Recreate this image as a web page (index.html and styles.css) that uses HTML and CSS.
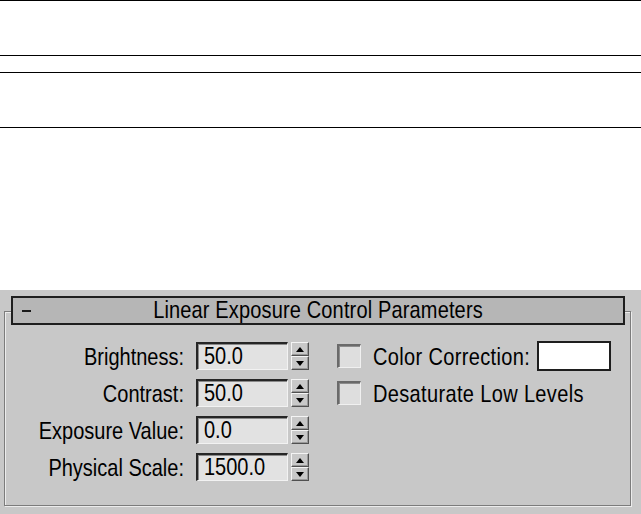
FILE: index.html
```html
<!DOCTYPE html>
<html lang="en">
<head>
<meta charset="utf-8">
<title>Linear Exposure Control Parameters</title>
<link rel="stylesheet" href="styles.css">
</head>
<body>
  <div class="doc">
    <div class="ruled"></div>
    <div class="ruled second"></div>
  </div>
  <div class="panel">
    <div class="group">
      <div class="titlebar">
        <span class="minus"></span>
        <span class="title txt">Linear Exposure Control Parameters</span>
        <span></span>
      </div>
      <div class="body">
        <div class="params">
          <label class="lbl"><span class="txt">Brightness:</span></label>
          <div class="field"><span class="txt">50.0</span></div>
          <div class="spinner"><span class="btn up"><svg width="8" height="5" viewBox="0 0 8 5"><path d="M0 5 L4 0 L8 5 Z"/></svg></span><span class="btn down"><svg width="8" height="5" viewBox="0 0 8 5"><path d="M0 0 L4 5 L8 0 Z"/></svg></span></div>

          <label class="lbl"><span class="txt">Contrast:</span></label>
          <div class="field"><span class="txt">50.0</span></div>
          <div class="spinner"><span class="btn up"><svg width="8" height="5" viewBox="0 0 8 5"><path d="M0 5 L4 0 L8 5 Z"/></svg></span><span class="btn down"><svg width="8" height="5" viewBox="0 0 8 5"><path d="M0 0 L4 5 L8 0 Z"/></svg></span></div>

          <label class="lbl"><span class="txt">Exposure Value:</span></label>
          <div class="field"><span class="txt">0.0</span></div>
          <div class="spinner"><span class="btn up"><svg width="8" height="5" viewBox="0 0 8 5"><path d="M0 5 L4 0 L8 5 Z"/></svg></span><span class="btn down"><svg width="8" height="5" viewBox="0 0 8 5"><path d="M0 0 L4 5 L8 0 Z"/></svg></span></div>

          <label class="lbl"><span class="txt">Physical Scale:</span></label>
          <div class="field"><span class="txt">1500.0</span></div>
          <div class="spinner"><span class="btn up"><svg width="8" height="5" viewBox="0 0 8 5"><path d="M0 5 L4 0 L8 5 Z"/></svg></span><span class="btn down"><svg width="8" height="5" viewBox="0 0 8 5"><path d="M0 0 L4 5 L8 0 Z"/></svg></span></div>
        </div>
        <div class="options">
          <div class="opt">
            <span class="check"></span>
            <span class="optlbl txt">Color Correction:</span>
            <span class="swatch"></span>
          </div>
          <div class="opt">
            <span class="check"></span>
            <span class="optlbl txt">Desaturate Low Levels</span>
          </div>
        </div>
      </div>
    </div>
  </div>
</body>
</html>
```
FILE: styles.css
```css
html, body {
  margin: 0;
  padding: 0;
  background: #ffffff;
}

body {
  width: 641px;
  height: 514px;
  overflow: hidden;
  font-family: "Liberation Sans", Arial, sans-serif;
  font-size: 20px;
  color: #000;
  white-space: nowrap;
}

/* the original UI font is taller for its width than Arial */
.txt {
  display: inline-block;
  transform: scaleY(1.22);
}

.ruled {
  height: 54px;
  border-top: 1px solid #000;
  border-bottom: 1px solid #000;
}

.ruled.second {
  margin-top: 16px;
}

.doc {
  height: 290px;
}

.panel {
  background: #c8c8c8;
  height: 224px;
  padding-top: 21px;
  box-sizing: border-box;
}

.group {
  margin: 0 10px 0 4px;
  height: 195px;
  box-sizing: border-box;
  border: 1px solid #7c7c7c;
  box-shadow: inset 1px 1px 0 #ececec, 1px 1px 0 #ececec;
}

.titlebar {
  position: relative;
  margin: -16px 5px 0 6px;
  height: 29px;
  box-sizing: border-box;
  border: 2px solid #1e1e1e;
  background: #b6b6b6;
  display: grid;
  grid-template-columns: 1fr auto 1fr;
  align-items: center;
}

.minus {
  justify-self: start;
  margin-left: 9px;
  width: 9px;
  height: 2px;
  background: #1a1a1a;
}

.title {
  line-height: 25px;
  letter-spacing: 0.15px;
}

.body {
  display: flex;
  padding-top: 17px;
}

.params {
  display: grid;
  grid-template-columns: 179px 92px 18px;
  grid-auto-rows: 28px;
  row-gap: 9px;
  align-items: center;
}

.lbl {
  justify-self: end;
  line-height: 28px;
}

.field {
  margin-left: 12px;
  width: 92px;
  height: 28px;
  box-sizing: border-box;
  background: #e2e2e2;
  border-top: 2px solid #262626;
  border-left: 2px solid #262626;
  border-right: 1px solid #f2f2f2;
  border-bottom: 1px solid #f2f2f2;
  box-shadow: inset 1px 1px 0 #8a8a8a;
  padding-left: 6px;
  line-height: 25px;
}

.spinner {
  margin-left: 15px;
  width: 18px;
  height: 28px;
  display: flex;
  flex-direction: column;
}

.btn {
  flex: 1;
  box-sizing: border-box;
  border-top: 1px solid #f4f4f4;
  border-left: 1px solid #f4f4f4;
  border-right: 1px solid #505050;
  border-bottom: 1px solid #505050;
  box-shadow: inset -1px -1px 0 #999;
  background: #c8c8c8;
  display: flex;
  align-items: center;
  justify-content: center;
}

.btn svg {
  display: block;
  fill: #000;
}

.options {
  margin-left: 43px;
  display: grid;
  grid-auto-rows: 28px;
  row-gap: 9px;
}

.opt {
  display: flex;
  align-items: center;
}

.check {
  width: 24px;
  height: 24px;
  box-sizing: border-box;
  background: #dedede;
  border-top: 2px solid #6a6a6a;
  border-left: 2px solid #6a6a6a;
  border-right: 1px solid #f0f0f0;
  border-bottom: 1px solid #f0f0f0;
  box-shadow: inset 1px 1px 0 #8c8c8c;
}

.optlbl {
  margin-left: 12px;
  line-height: 28px;
  letter-spacing: 0.35px;
}

.swatch {
  margin-left: 7px;
  width: 74px;
  height: 30px;
  box-sizing: border-box;
  border: 2px solid #1e1e1e;
  background: #fff;
}
```
